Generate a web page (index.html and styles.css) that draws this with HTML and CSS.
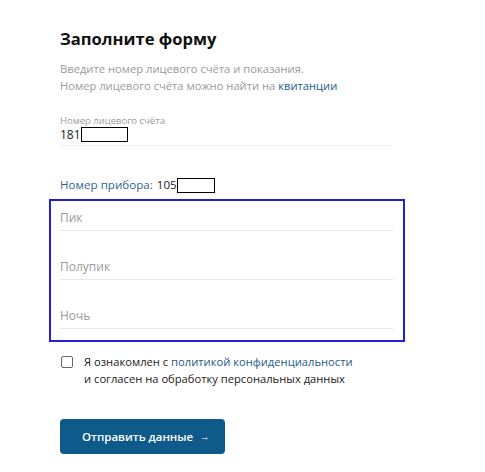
FILE: index.html
```html
<!doctype html>
<html>
  <head>
    <title>Заполните форму</title>
    <link rel="stylesheet" href="styles.css">
  </head>
  <body>
    <div class='form'>
      <h1 class='form-title'>Заполните форму</h1>
      <p class='form-hint'>
        Введите номер лицевого счёта и показания.<br>
        Номер лицевого счёта можно найти на <a href='#'>квитанции</a>
      </p>

      <div class='account'>
        <div class='account-label'>Номер лицевого счёта</div>
        <div class='account-value'>181<span class='mask mask-account'></span></div>
      </div>

      <div class='device'>
        <span class='device-label'>Номер прибора:</span>
        <span class='device-value'>105<span class='mask mask-device'></span></span>
      </div>

      <div class='readings'>
        <div class='reading'>Пик</div>
        <div class='reading'>Полупик</div>
        <div class='reading'>Ночь</div>
      </div>

      <label class='agree'>
        <span class='agree-box'></span>
        <span class='agree-text'>
          Я ознакомлен с <a href='#'>политикой конфиденциальности</a><br>
          и согласен на обработку персональных данных
        </span>
      </label>

      <button class='send'>Отправить данные <span class='send-arrow'>&rarr;</span></button>
    </div>
  </body>
</html>
```

FILE: styles.css
```css
body {
  margin: 0;
  background: #fff;
  font-family: "Open Sans", "Noto Sans", sans-serif;
  color: #222;
}

a {
  color: #1d5b88;
  text-decoration: none;
}

.form {
  width: 333px;
  padding: 26px 0 0 60px;
}

.form-title {
  margin: 0;
  font-size: 16.6px;
  font-weight: 700;
  line-height: 26px;
  color: #111;
}

.form-hint {
  margin: 8px 0 0;
  font-size: 11.2px;
  line-height: 17px;
  color: #9a9a9a;
}

/* account number */
.account {
  margin-top: 21px;
  padding-bottom: 3px;
  border-bottom: 1px solid #f6f1e6;
}

.account-label {
  font-size: 9.5px;
  line-height: 12px;
  color: #9a9a9a;
}

.account-value {
  display: flex;
  align-items: center;
  font-size: 12px;
  line-height: 15px;
}

.mask {
  display: inline-block;
  box-sizing: border-box;
  border: 1px solid #000;
  background: #fff;
}

.mask-account {
  width: 47px;
  height: 15px;
}

.mask-device {
  width: 38px;
  height: 15px;
}

/* device */
.device {
  display: flex;
  align-items: center;
  margin-top: 31px;
  font-size: 11.6px;
  line-height: 16px;
}

.device-label {
  color: #2f6690;
  margin-right: 4px;
}

.device-value {
  display: flex;
  align-items: center;
}

/* readings block */
.readings {
  margin: 6px -12px 0 -11px;
  padding: 6px 10px 11px 9px;
  border: 2px solid #2222cc;
}

.reading {
  padding: 3px 0 4px;
  border-bottom: 1px solid #e6e6e6;
  font-size: 12px;
  line-height: 16px;
  color: #9a9a9a;
}

.reading + .reading {
  margin-top: 25px;
}

/* agreement */
.agree {
  display: flex;
  margin-top: 11px;
  font-size: 11.2px;
  line-height: 17px;
  color: #1a1a1a;
}

.agree-box {
  flex: none;
  box-sizing: border-box;
  width: 12px;
  height: 12px;
  margin: 3px 11px 0 1px;
  border: 1.5px solid #666;
  border-radius: 2px;
}

/* submit */
.send {
  display: flex;
  align-items: center;
  margin-top: 32px;
  width: 165px;
  height: 35px;
  padding: 0 0 0 22px;
  border: 0;
  border-radius: 4px;
  background: #0d5a8b;
  color: #fff;
  font-family: inherit;
  font-size: 11.5px;
  font-weight: 600;
}

.send-arrow {
  margin-left: 7px;
  font-size: 9px;
}
```
